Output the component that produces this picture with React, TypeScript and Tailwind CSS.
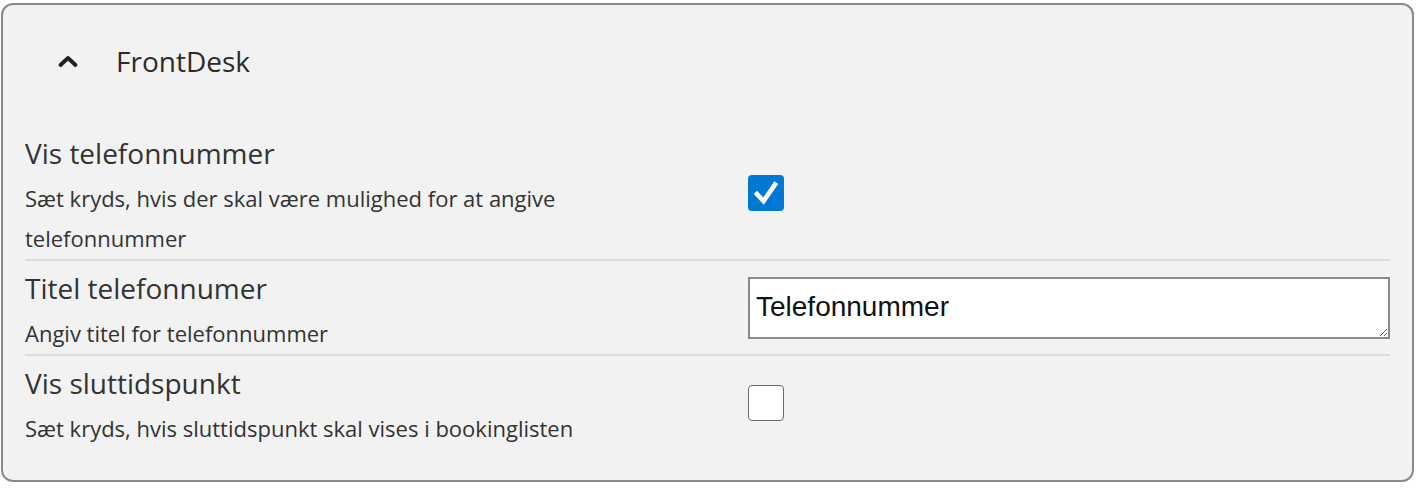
import React from 'react';

const font = { fontFamily: '"Open Sans", "Liberation Sans", sans-serif' };

const Checkbox: React.FC<{ checked: boolean }> = ({ checked }) =>
  checked ? (
    <div className="w-[36px] h-[36px] rounded-[4px] bg-[#0078d4] flex items-center justify-center">
      <svg width="28" height="28" viewBox="0 0 28 28" fill="none">
        <path d="M5 15 L11.5 22 L23 5.5" stroke="#ffffff" strokeWidth="4.6" strokeLinecap="square" strokeLinejoin="miter" />
      </svg>
    </div>
  ) : (
    <div className="w-[36px] h-[36px] rounded-[4px] bg-white border-[1.5px] border-[#6b6b6b]"></div>
  );

interface RowProps {
  title: string;
  description: string;
  children: React.ReactNode;
  divider?: boolean;
}

const SettingRow: React.FC<RowProps> = ({ title, description, children, divider }) => (
  <div className={`flex items-center ${divider ? 'border-b-2 border-[#dcdcdc]' : ''}`}>
    <div className="w-[723px] shrink-0 pr-[40px] pt-[9px] pb-[1px]">
      <div className="text-[28px] leading-[36px] text-[#333]">{title}</div>
      <div className="text-[22px] leading-[40px] text-[#333] mt-[7px]">{description}</div>
    </div>
    <div className="flex-1">{children}</div>
  </div>
);

export default function App() {
  return (
    <div className="bg-white w-[1419px] h-[488px] pt-[3px] pl-[1px]" style={font}>
      <div className="w-[1413px] h-[479px] border-2 border-[#8a8a8a] rounded-[12px] bg-[#f2f2f2]">
        <div className="h-[112px] flex items-center pl-[54px] text-[#222]">
          <svg width="22" height="14" viewBox="0 0 22 14" fill="none">
            <path d="M3.5 11 L11 4 L18.5 11" stroke="#222" strokeWidth="3.8" strokeLinecap="round" strokeLinejoin="round" />
          </svg>
          <span className="ml-[37px] text-[28px] text-[#2b2b2b]">FrontDesk</span>
        </div>
        <div className="mt-[9px] px-[22px]">
          <SettingRow
            title="Vis telefonnummer"
            description="Sæt kryds, hvis der skal være mulighed for at angive telefonnummer"
            divider
          >
            <Checkbox checked />
          </SettingRow>
          <SettingRow title="Titel telefonnumer" description="Angiv titel for telefonnummer" divider>
            <textarea
              defaultValue="Telefonnummer"
              className="block w-full h-[62px] bg-white border-2 border-[#8a8a8a] pt-[12px] px-[6px] text-[28px] leading-[32px] text-[#111] outline-none"
              style={{ fontFamily: '"Liberation Sans", Arial, sans-serif' }}
            />
          </SettingRow>
          <SettingRow title="Vis sluttidspunkt" description="Sæt kryds, hvis sluttidspunkt skal vises i bookinglisten">
            <Checkbox checked={false} />
          </SettingRow>
        </div>
      </div>
    </div>
  );
}
